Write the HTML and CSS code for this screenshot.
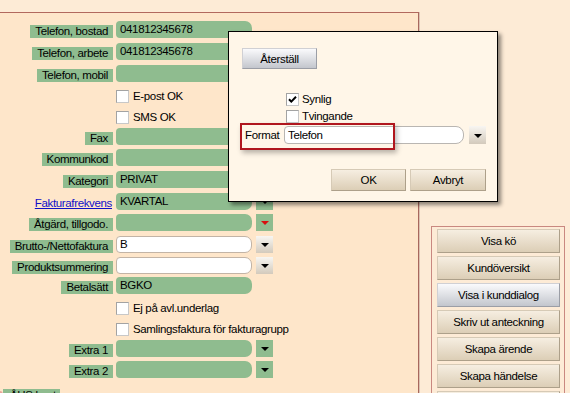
FILE: index.html
```html
<!DOCTYPE html>
<html lang="sv">
<head>
<meta charset="utf-8">
<title>Kundkort</title>
<link rel="stylesheet" href="styles.css">
</head>
<body>
<div class="screen">
  <section class="form-panel">
    <div class="rows">
      <div class="row"><span class="label-cell"><span class="lbl">Telefon, bostad</span></span><span class="field">041812345678</span></div>
      <div class="row loose"><span class="label-cell"><span class="lbl">Telefon, arbete</span></span><span class="field">041812345678</span></div>
      <div class="row loose"><span class="label-cell"><span class="lbl">Telefon, mobil</span></span><span class="field"></span></div>
      <div class="row check"><span class="box"></span><span class="cb-text">E-post OK</span></div>
      <div class="row check"><span class="box"></span><span class="cb-text">SMS OK</span></div>
      <div class="row"><span class="label-cell"><span class="lbl">Fax</span></span><span class="field"></span></div>
      <div class="row"><span class="label-cell"><span class="lbl">Kommunkod</span></span><span class="field"></span></div>
      <div class="row loose"><span class="label-cell"><span class="lbl">Kategori</span></span><span class="field">PRIVAT</span></div>
      <div class="row loose"><span class="label-cell"><a class="lbl link" href="#">Fakturafrekvens</a></span><span class="field">KVARTAL</span><span class="drop green"><i class="tri"></i></span></div>
      <div class="row"><span class="label-cell"><span class="lbl">Åtgärd, tillgodo.</span></span><span class="field"></span><span class="drop green"><i class="tri red"></i></span></div>
      <div class="row loose"><span class="label-cell"><span class="lbl">Brutto-/Nettofaktura</span></span><span class="field white">B</span><span class="drop grey"><i class="tri"></i></span></div>
      <div class="row"><span class="label-cell"><span class="lbl">Produktsummering</span></span><span class="field white"></span><span class="drop grey"><i class="tri"></i></span></div>
      <div class="row tight"><span class="label-cell"><span class="lbl">Betalsätt</span></span><span class="field">BGKO</span></div>
      <div class="row check"><span class="box"></span><span class="cb-text">Ej på avl.underlag</span></div>
      <div class="row check"><span class="box"></span><span class="cb-text">Samlingsfaktura för fakturagrupp</span></div>
      <div class="row"><span class="label-cell"><span class="lbl">Extra 1</span></span><span class="field"></span><span class="drop green"><i class="tri"></i></span></div>
      <div class="row"><span class="label-cell"><span class="lbl">Extra 2</span></span><span class="field"></span><span class="drop green"><i class="tri"></i></span></div>
    </div>
    <div class="section-head"><span class="marker"></span><span class="lbl">ÅHS bost</span></div>
  </section>

  <aside class="actions">
    <button class="btn">Visa kö</button>
    <button class="btn">Kundöversikt</button>
    <button class="btn grey">Visa i kunddialog</button>
    <button class="btn">Skriv ut anteckning</button>
    <button class="btn">Skapa ärende</button>
    <button class="btn">Skapa händelse</button>
    <button class="btn">&nbsp;</button>
  </aside>
</div>

<div class="dialog">
  <button class="btn grey reset">Återställ</button>
  <div class="opts">
    <div class="opt"><span class="box"><svg width="11" height="11" viewBox="0 0 11 11"><path d="M2 5.2 L4.3 7.6 L9 2.8" fill="none" stroke="#000" stroke-width="2"/></svg></span><span class="cb-text">Synlig</span></div>
    <div class="opt"><span class="box"></span><span class="cb-text">Tvingande</span></div>
  </div>
  <div class="format-row">
    <span class="format-label">Format</span>
    <span class="input">Telefon</span>
    <span class="drop grey tall"><i class="tri"></i></span>
    <span class="highlight"></span>
  </div>
  <div class="dlg-buttons">
    <button class="btn ok">OK</button>
    <button class="btn cancel">Avbryt</button>
  </div>
</div>
</body>
</html>
```

FILE: styles.css
```css
* { box-sizing: border-box; }

html, body {
  margin: 0;
  height: 100%;
}

body {
  position: relative;
  overflow: hidden;
  background: #FDEBD6;
  font-family: "Liberation Sans", Arial, sans-serif;
  font-size: 11.5px;
  letter-spacing: -0.35px;
  color: #000;
}

.screen {
  display: flex;
  align-items: flex-start;
}

/* ---------- left form panel ---------- */
.form-panel {
  width: 419px;
  height: 381px;
  margin-top: 12px;
  padding-top: 8px;
  background: #FEE6CA;
  border-top: 1px solid #B2695E;
  border-right: 1px solid #A8685E;
  box-shadow: 1px 0 0 #DCC3B2;
}

.rows {
  display: flex;
  flex-direction: column;
  gap: 4px;
}

.row {
  display: flex;
  height: 17px;
}
.row.loose { margin-top: 1px; }
.row.tight { margin-top: -1px; }

.label-cell {
  width: 113px;
  display: flex;
  justify-content: flex-end;
  align-items: flex-end;
}

.lbl {
  height: 13px;
  line-height: 13px;
  padding: 0 5px;
  background: #8FBC8F;
  white-space: nowrap;
}

.lbl.link {
  background: transparent;
  padding: 0 1px 0 0;
  color: #1010C8;
  text-decoration: underline;
}

.field {
  width: 136px;
  height: 17px;
  margin-left: 3px;
  padding-left: 4px;
  line-height: 17px;
  background: #8FBC8F;
  border-radius: 4px 7px 7px 4px;
  white-space: nowrap;
}

.field.white {
  background: #fff;
  border: 1px solid #C2B4A6;
  padding-left: 3px;
  line-height: 15px;
}

.drop {
  width: 17px;
  height: 17px;
  margin-left: 4px;
  display: flex;
  align-items: center;
  justify-content: center;
}
.drop.green { background: #8FBC8F; }
.drop.grey { background: linear-gradient(#F8F6F2, #D3CABC); }
.drop.tall { height: 18px; }

.tri {
  width: 0;
  height: 0;
  border-left: 4px solid transparent;
  border-right: 4px solid transparent;
  border-top: 4px solid #000;
  margin-top: 1px;
}
.tri.red { border-top-color: #D81010; }

/* checkboxes */
.row.check {
  align-items: flex-end;
  padding-left: 116px;
}

.box {
  width: 13px;
  height: 13px;
  flex: none;
  background: #fff;
  border: 1px solid #A3A3A3;
  border-right-color: #C8C8C8;
  border-bottom-color: #C8C8C8;
  display: flex;
  align-items: center;
  justify-content: center;
}

.cb-text {
  margin-left: 4px;
  height: 13px;
  line-height: 13px;
  white-space: nowrap;
}

.section-head {
  display: flex;
  align-items: flex-start;
  margin-top: 11px;
}
.section-head .lbl { margin-left: 0; padding: 0 4px 0 7px; }
.marker {
  width: 6px;
  height: 8px;
  margin-left: -3px;
  margin-top: 2px;
  border-radius: 50%;
  background: #E9A59A;
}

/* ---------- right actions ---------- */
.actions {
  width: 134px;
  height: 167px;
  margin-top: 226px;
  margin-left: 12px;
  padding: 2px 4px 0 5px;
  border: 1px solid #C98880;
  border-bottom: none;
  display: flex;
  flex-direction: column;
  gap: 3px;
  overflow: hidden;
}

.btn {
  flex: none;
  height: 24px;
  padding: 0;
  font: inherit;
  letter-spacing: inherit;
  color: #000;
  text-align: center;
  background: linear-gradient(#F6EEE1, #DCCEB6);
  border: 1px solid;
  border-color: #D6CAB6 #ADA08A #ADA08A #D6CAB6;
  border-radius: 0;
}

.btn.grey {
  background: linear-gradient(#FAFAFC, #C3C6CD);
  border-color: #D0D0D4 #9B9EA6 #9B9EA6 #D0D0D4;
}

/* ---------- dialog ---------- */
.dialog {
  position: absolute;
  left: 228px;
  top: 31px;
  width: 270px;
  height: 171px;
  padding: 16px 11px 0 13px;
  background: #FFF6E8;
  border: 1px solid #000;
  box-shadow: 3px 3px 4px rgba(0, 0, 0, 0.45);
  display: flex;
  flex-direction: column;
  align-items: flex-start;
}

.btn.reset {
  width: 75px;
  height: 21px;
}

.opts {
  margin-top: 24px;
  margin-left: 44px;
  display: flex;
  flex-direction: column;
  gap: 4px;
}

.opt {
  display: flex;
  height: 13px;
  align-items: center;
}
.opt .cb-text { margin-left: 3px; }

.format-row {
  position: relative;
  display: flex;
  margin-top: 3px;
  height: 18px;
}

.format-label {
  width: 42px;
  padding-left: 3px;
  line-height: 18px;
}

.input {
  width: 180px;
  height: 18px;
  padding-left: 3px;
  line-height: 16px;
  background: #fff;
  border: 1px solid #B9B6B2;
  border-radius: 4px 8px 8px 4px;
}

.format-row .drop { margin-left: 5px; }

.highlight {
  position: absolute;
  left: -2px;
  top: -3px;
  width: 155px;
  height: 27px;
  border: 2px solid #B0161E;
  box-shadow: 2px 3px 5px rgba(0, 0, 0, 0.28);
  pointer-events: none;
}

.dlg-buttons {
  align-self: stretch;
  display: flex;
  justify-content: flex-end;
  gap: 4px;
  margin-top: 25px;
}

.btn.ok { width: 75px; height: 22px; }
.btn.cancel { width: 76px; height: 22px; }
```
